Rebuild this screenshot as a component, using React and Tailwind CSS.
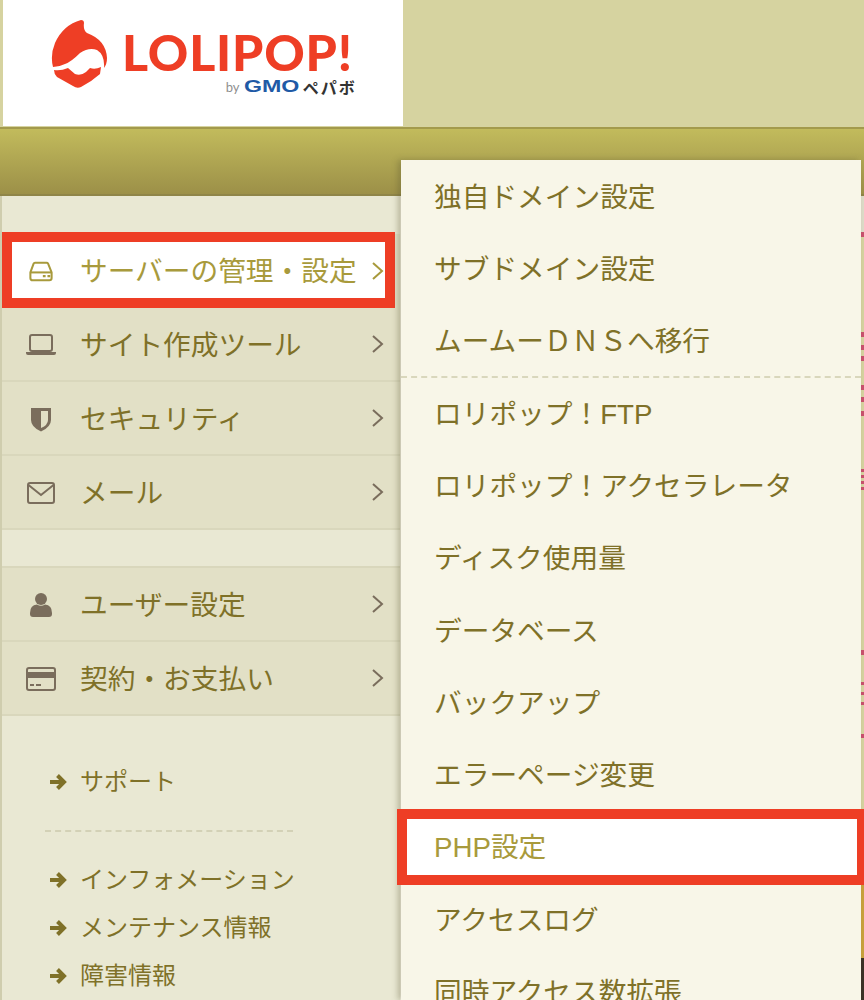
import React from 'react';

const font = "font-['Liberation_Sans','Noto_Sans_CJK_JP',sans-serif]";

const DriveIcon = () => (
    <svg width="24" height="21" viewBox="0 0 26 22" fill="none" stroke="currentColor" strokeWidth="2.2">
        <path d="M1.5 12 L5 2.5 Q5.4 1.5 6.5 1.5 H19 Q20.2 1.5 20.7 2.5 L24.5 12 V18 Q24.5 20.5 22 20.5 H4 Q1.5 20.5 1.5 18 Z" />
        <path d="M1.5 12 H24.5" />
        <path d="M15 16 H18 M20 16 H23" />
    </svg>
);

const LaptopIcon = () => (
    <svg width="30" height="22" viewBox="0 0 30 22" fill="none">
        <rect x="4" y="1" width="22" height="16" rx="2" stroke="currentColor" strokeWidth="2" />
        <path d="M0 18 H30 V19 Q30 21 28 21 H2 Q0 21 0 19 Z" fill="currentColor" />
    </svg>
);

const ShieldIcon = () => (
    <svg width="22" height="25" viewBox="0 0 22 25" fill="none">
        <path d="M1 1 H21 V13 Q21 20 11 24.5 Q1 20 1 13 Z" fill="currentColor" />
        <path d="M11 4 H18 V13 Q18 18 11 21 Z" fill="#e2e0c6" />
    </svg>
);

const MailIcon = () => (
    <svg width="28" height="22" viewBox="0 0 28 22" fill="none" stroke="currentColor" strokeWidth="2">
        <rect x="1" y="1" width="26" height="20" rx="2" />
        <path d="M1.5 3 L14 13 L26.5 3" />
    </svg>
);

const UserIcon = () => (
    <svg width="22" height="24" viewBox="0 0 22 24" fill="currentColor">
        <circle cx="11" cy="6" r="6" />
        <path d="M0 20 Q0 12 7 11.5 Q11 14 15 11.5 Q22 12 22 20 V21 Q22 24 19 24 H3 Q0 24 0 21 Z" />
    </svg>
);

const CardIcon = () => (
    <svg width="30" height="24" viewBox="0 0 30 24" fill="none">
        <rect x="1" y="1" width="28" height="22" rx="2" stroke="currentColor" strokeWidth="2" />
        <rect x="1" y="5" width="28" height="6" fill="currentColor" />
        <path d="M4 18 H8 M10 18 H15" stroke="currentColor" strokeWidth="2" />
    </svg>
);

const Chevron = () => (
    <svg width="12" height="18" viewBox="0 0 12 18" fill="none" stroke="currentColor" strokeWidth="2">
        <path d="M1 1 L10 9 L1 17" />
    </svg>
);

const ArrowIcon = () => (
    <svg width="17" height="16" viewBox="0 0 17 16" fill="none" stroke="currentColor" strokeWidth="4">
        <path d="M0 8 H14" />
        <path d="M7.5 1.5 L14 8 L7.5 14.5" />
    </svg>
);

const LogoMark = () => (
    <svg width="56" height="68" viewBox="0 0 56 68" className="shrink-0">
        <path fill="#ee3e25" d="M30 0 Q33 0 33 3 Q32 10 36 13 Q55 20 56 38 Q56 44 53 48 Q54 35 46 30 Q38 27 29 33 Q20 42 14 44 Q8 47 2 47 Q-1 35 4 23 Q12 5 30 0 Z" />
        <path fill="#ee3e25" d="M3 50 Q10 51 17 48 L24 54 Q30 56 35 52 L39 48 Q44 50 50 47 L49 54 Q40 62 30 67 Q26 69 22 66 L6 57 Q3 54 3 50 Z" />
    </svg>
);

const Logo = () => (
    <div className="flex items-start gap-[15px]">
        <LogoMark />
        <div className="flex flex-col items-end mt-[12px]">
            <div className="font-['Lato',sans-serif] font-black text-[50px] leading-[40px] tracking-[0.8px] mr-[4px] text-[#ee3e25] whitespace-nowrap">LOLIPOP!</div>
            <div className="flex items-center h-[16px] mt-[7px] leading-none whitespace-nowrap">
                <span className="font-['Lato',sans-serif] text-[13px] text-[#8f8f8f] mr-[4px]">by</span>
                <span className="font-['Liberation_Sans',sans-serif] font-bold text-[16px] text-[#1f5aa6] scale-x-[1.45] origin-left mr-[21px]">GMO</span>
                <span className="font-['Noto_Sans_CJK_JP',sans-serif] font-bold text-[16px] tracking-[2px] text-[#333333]">ペパボ</span>
            </div>
        </div>
    </div>
);

const mainItems = [
    { label: "サーバーの管理・設定", icon: <DriveIcon />, active: true },
    { label: "サイト作成ツール", icon: <LaptopIcon /> },
    { label: "セキュリティ", icon: <ShieldIcon /> },
    { label: "メール", icon: <MailIcon /> },
];

const accountItems = [
    { label: "ユーザー設定", icon: <UserIcon /> },
    { label: "契約・お支払い", icon: <CardIcon /> },
];

const subItems = [
    { label: "独自ドメイン設定" },
    { label: "サブドメイン設定" },
    { label: "ムームーＤＮＳへ移行", divider: true },
    { label: "ロリポップ！FTP" },
    { label: "ロリポップ！アクセラレータ" },
    { label: "ディスク使用量" },
    { label: "データベース" },
    { label: "バックアップ" },
    { label: "エラーページ変更" },
    { label: "PHP設定", active: true },
    { label: "アクセスログ" },
    { label: "同時アクセス数拡張" },
];

// pink marks showing past the edge of the submenu: [gap before, mark height]
const marks = [
    [0, 5], [95, 5], [8, 5], [6, 5], [24, 5], [7, 5], [9, 5], [53, 3], [3, 3], [3, 3], [3, 3], [160, 5], [27, 3], [7, 3], [7, 3], [29, 4],
];

function NavRow({ item }) {
    if (item.active) {
        return (
            <div className="relative h-[74px] flex items-center pl-[26px] pr-[16px] bg-[#e2e0c6]">
                <div className="absolute left-0 top-[-2px] w-[393px] h-[76px] border-[10px] border-[#ee3e25] bg-white" />
                <span className="relative w-[26px] mr-[26px] flex justify-center text-[#a89a3c]">{item.icon}</span>
                <span className="relative flex-1 mt-[1px] text-[27.7px] text-[#a89a3c] whitespace-nowrap">{item.label}</span>
                <span className="relative text-[#a89a3c]"><Chevron /></span>
            </div>
        );
    }
    return (
        <div className="h-[74px] flex items-center pl-[24px] pr-[16px] bg-[#e2e0c6] border-b-2 border-[#d9d7bc]">
            <span className="w-[30px] mr-[24px] mt-[2px] flex justify-center text-[#7a6d5c]">{item.icon}</span>
            <span className="flex-1 mt-[4px] text-[27.7px] text-[#7f7128] whitespace-nowrap">{item.label}</span>
            <span className="text-[#7a6d5c]"><Chevron /></span>
        </div>
    );
}

function SmallLink({ label }) {
    return (
        <div className="flex items-center h-[48px] text-[#7f7128]">
            <span className="w-[35px] pl-[5px]"><ArrowIcon /></span>
            <span className="text-[24px] whitespace-nowrap">{label}</span>
        </div>
    );
}

export default function App() {
    return (
        <div className={`relative w-[864px] h-[1000px] overflow-hidden bg-[#f8f6e8] ${font}`}>
            {/* Header */}
            <div className="h-[127px] bg-[#d6d3a0] pl-[3px]">
                <div className="w-[400px] h-[126px] bg-white pl-[48px] pt-[20px]">
                    <Logo />
                </div>
            </div>
            <div className="h-[69px] bg-gradient-to-b from-[#c2bb5c] to-[#9c9048] border-t-2 border-[#a39a4c] border-b-2 border-b-[#8f8548]" />

            <div className="flex h-[804px]">
                {/* Sidebar */}
                <div className="w-[400px] shrink-0 border-l-2 border-[#cfcdae] bg-[#e9e8d3] pt-[38px]">
                    <div>
                        {mainItems.map((item) => <NavRow key={item.label} item={item} />)}
                    </div>
                    <div className="mt-[36px] border-t-2 border-[#d9d7bc]">
                        {accountItems.map((item) => <NavRow key={item.label} item={item} />)}
                    </div>
                    <div className="pl-[43px] pt-[42px]">
                        <SmallLink label="サポート" />
                        <div className="w-[248px] border-t-2 border-dashed border-[#d3d1b6] mt-[24px] mb-[24px]" />
                        <SmallLink label="インフォメーション" />
                        <SmallLink label="メンテナンス情報" />
                        <SmallLink label="障害情報" />
                    </div>
                </div>

                {/* Main content peeking out right of the submenu */}
                <div className="flex-1 flex justify-end">
                    <div className="w-[3px] h-full bg-[#d6d3a0] flex flex-col">
                        <div className="h-[36px] shrink-0 bg-[#dedcc9]" />
                        {marks.map(([gap, height], i) => (
                            <div key={i} style={{ marginTop: gap, height }} className="shrink-0 bg-[#c9506e]" />
                        ))}
                        <div className="mt-[147px] h-[73px] shrink-0 bg-[#c9a23c]" />
                        <div className="flex-1 bg-[#3a3226]" />
                    </div>
                </div>
            </div>

            {/* Submenu */}
            <div className="absolute left-[401px] top-[160px] w-[460px] h-[840px] bg-[#f8f6e8] shadow-[-3px_0_6px_rgba(90,85,50,0.35)]">
                {subItems.map((item) => (
                    <div key={item.label} className={`relative h-[72.3px] flex items-center pl-[33px] text-[27.7px] whitespace-nowrap ${item.active ? "pt-[1px] text-[#a89a3c]" : "pt-[3px] text-[#7f7128]"}`}>
                        {item.active && <div className="absolute left-[-4px] top-[-2px] w-[470px] h-[76px] border-[10px] border-[#ee3e25] bg-white" />}
                        <span className="relative">{item.label}</span>
                        {item.divider && <div className="absolute left-0 right-0 bottom-[-1px] border-t-2 border-dashed border-[#d9d7bc]" />}
                    </div>
                ))}
            </div>
        </div>
    );
}
